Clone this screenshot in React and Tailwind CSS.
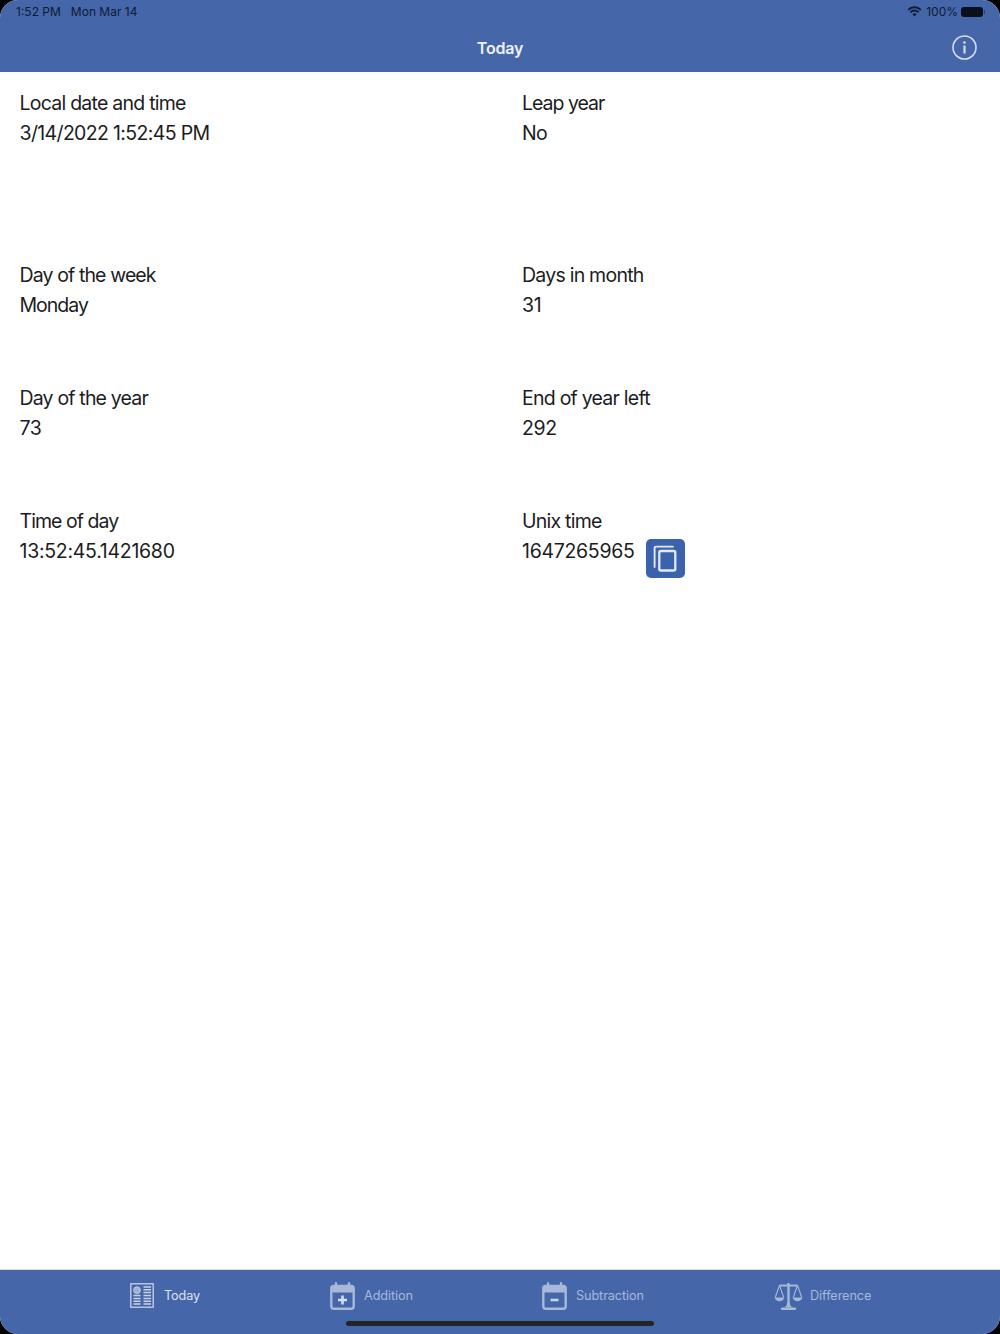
const font = { fontFamily: "Inter, 'Noto Sans', sans-serif" };

function Field({ label, labelClass, value, valueClass, children }) {
  return (
    <div className="text-[19.5px] leading-[29px] text-[#1c1c1e]">
      <div className={labelClass}>{label}</div>
      <div className="mt-[1px] flex items-start">
        <span className={valueClass}>{value}</span>
        {children}
      </div>
    </div>
  );
}

function CopyButton() {
  return (
    <div className="ml-[11px] mt-[2px] flex h-[39px] w-[39px] items-center justify-center rounded-[5px] bg-[#3a62ad]">
      <svg width="24" height="27" viewBox="0 0 24 27" fill="none" stroke="#e3e9f4" strokeWidth="1.9">
        <path d="M20 1.600H3a1.400 1.400 0 0 0-1.400 1.400V22" strokeLinecap="round" />
        <rect x="6.300" y="6" width="16" height="19.500" rx="1.500" strokeWidth="2.300" />
      </svg>
    </div>
  );
}

function TodayIcon() {
  return (
    <svg width="24" height="25" viewBox="0 0 24 25" fill="none" stroke="#c8d3e8" strokeWidth="1.300">
      <rect x="0.800" y="0.800" width="22.400" height="23.400" />
      <circle cx="7" cy="7.200" r="3.400" fill="#9fb2d6" strokeWidth="0.800" />
      <path d="M13.500 4h7.500M13.500 6.800h7.500M13.500 9.600h7.500M13.500 12.600h7.500M3.500 12.600h7M3.500 15.400h7M13.500 15.400h7.500M3.500 18.200h7M13.500 18.200h7.500M3.500 21h7M13.500 21h7.500" strokeWidth="1.500" />
    </svg>
  );
}

function CalIcon({ minus }) {
  return (
    <svg width="25" height="28" viewBox="0 0 25 28" fill="none">
      <path d="M6 1.200v4M19 1.200v4" stroke="#a7b8d8" strokeWidth="2.400" strokeLinecap="round" />
      <rect x="1.300" y="4" width="22.400" height="22.700" rx="2.400" stroke="#a7b8d8" strokeWidth="2.400" />
      <path d="M1.300 6.500a2.400 2.400 0 0 1 2.400-2.500h17.600a2.400 2.400 0 0 1 2.400 2.500V10.500H1.300z" fill="#a7b8d8" />
      {minus ? (
        <path d="M8.500 18h8" stroke="#c8d3e8" strokeWidth="2.600" />
      ) : (
        <path d="M8 18h9M12.500 13.500v9" stroke="#d5dded" strokeWidth="2.600" />
      )}
    </svg>
  );
}

function ScaleIcon() {
  return (
    <svg width="29" height="28" viewBox="0 0 29 28" fill="none" stroke="#a7b8d8" strokeWidth="1.400">
      <path d="M14.500 1v23" strokeWidth="2.400" />
      <path d="M8 26.700h13" strokeWidth="2.400" strokeLinecap="round" />
      <path d="M10 25.500c2.500-1 3-2.500 3.200-5h2.600c.2 2.500.7 4 3.200 5z" fill="#a7b8d8" stroke="none" />
      <path d="M5.500 3.500h18" strokeWidth="1.800" />
      <path d="M5.500 3.500L1.200 15.500M5.500 3.500L9.800 15.500M23.500 3.500L19.200 15.500M23.500 3.500L27.800 15.500" strokeWidth="1.100" />
      <path d="M0.700 15.500h9.600c-.5 2.600-2.600 3.800-4.800 3.800S1.200 18.100.7 15.500z" fill="#a7b8d8" stroke="none" />
      <path d="M18.700 15.500h9.600c-.5 2.600-2.600 3.800-4.800 3.800s-4.300-1.200-4.800-3.800z" fill="#a7b8d8" stroke="none" />
    </svg>
  );
}

function Tab({ icon, label, active, className }) {
  return (
    <div className={`flex items-center ${className}`}>
      {icon}
      <span className={`pt-[2px] text-[12.700px] leading-none tracking-[-0.100px] ${active ? "text-[#dbe2f0]" : "text-[#a7b8d8]"}`}>{label}</span>
    </div>
  );
}

export default function App() {
  return (
    <div className="h-[1334px] w-[1000px] overflow-hidden bg-black" style={font}>
      <div className="flex h-full flex-col overflow-hidden rounded-[18px] bg-white">
        <header className="relative h-[72px] shrink-0 bg-[#4567a9]">
          <div className="flex h-[23px] items-center justify-between pl-[16px] pr-[15px] text-[12px] leading-none text-[#0f1a33]">
            <div className="flex gap-[10px]">
              <span>1:52 PM</span>
              <span>Mon Mar 14</span>
            </div>
            <div className="flex items-center">
              <svg width="15" height="11" viewBox="0 0 14 11" fill="#0f1a33" className="mr-[4px]">
                <path d="M7 10.500 4.900 8.300a3 3 0 0 1 4.200 0z" />
                <path d="M3.600 7 2.200 5.500a6.800 6.800 0 0 1 9.600 0L10.400 7a4.800 4.800 0 0 0-6.800 0z" />
                <path d="M1.300 4.600 0 3.200a9.800 9.800 0 0 1 14 0l-1.300 1.400a8 8 0 0 0-11.400 0z" />
              </svg>
              <span>100%</span>
              <div className="ml-[3px] flex items-center">
                <div className="h-[10px] w-[22px] rounded-[3px] bg-[#0a0f1c]" />
                <div className="ml-[1px] h-[4px] w-[1px] bg-[#27406f]" />
              </div>
            </div>
          </div>
          <div className="flex h-[49px] items-center justify-center text-[16px] font-semibold tracking-[-0.200px] text-[#eef1f8]">
            Today
          </div>
          <div className="absolute left-[952px] top-[35px] h-[25px] w-[25px]">
            <svg width="25" height="25" viewBox="0 0 25 25" fill="none" stroke="#d5dded">
              <circle cx="12.500" cy="12.500" r="11.500" strokeWidth="1.600" />
              <circle cx="12.500" cy="7.500" r="1.300" fill="#d5dded" stroke="none" />
              <path d="M12.500 10.500v8" strokeWidth="2.200" />
            </svg>
          </div>
        </header>

        <main className="grid min-h-0 flex-1 grid-cols-[502.500px_1fr] content-start pl-[19.500px] pt-[17px]">
          <div className="h-[172px]"><Field label="Local date and time" labelClass="tracking-[-0.760px]" value="3/14/2022 1:52:45 PM" valueClass="tracking-[-0.650px]" /></div>
          <div className="h-[172px]"><Field label="Leap year" labelClass="tracking-[-1px]" value="No" valueClass="tracking-[-0.700px]" /></div>
          <div className="h-[123px]"><Field label="Day of the week" labelClass="tracking-[-0.880px]" value="Monday" valueClass="tracking-[-1px]" /></div>
          <div className="h-[123px]"><Field label="Days in month" labelClass="tracking-[-0.760px]" value="31" valueClass="tracking-[-0.350px]" /></div>
          <div className="h-[123px]"><Field label="Day of the year" labelClass="tracking-[-0.820px]" value="73" valueClass="tracking-[-0.350px]" /></div>
          <div className="h-[123px]"><Field label="End of year left" labelClass="tracking-[-0.760px]" value="292" valueClass="tracking-[-0.350px]" /></div>
          <div><Field label="Time of day" labelClass="tracking-[-0.940px]" value="13:52:45.1421680" valueClass="tracking-[-0.280px]" /></div>
          <div><Field label="Unix time" labelClass="tracking-[-0.760px]" value="1647265965" valueClass="tracking-[-0.300px]"><CopyButton /></Field></div>
        </main>

        <footer className="relative h-[65px] shrink-0 border-t border-[#d9dce2] bg-[#4567a9]">
          <div className="flex h-[51px] items-center">
            <Tab className="ml-[130px] w-[200px] gap-[10px]" active icon={<TodayIcon />} label="Today" />
            <Tab className="w-[212px] gap-[9px]" icon={<CalIcon />} label="Addition" />
            <Tab className="w-[232px] gap-[9px]" icon={<CalIcon minus />} label="Subtraction" />
            <Tab className="gap-[7px]" icon={<ScaleIcon />} label="Difference" />
          </div>
          <div className="mx-auto h-[5px] w-[308px] rounded-full bg-[#222426]" />
        </footer>
      </div>
    </div>
  );
}
